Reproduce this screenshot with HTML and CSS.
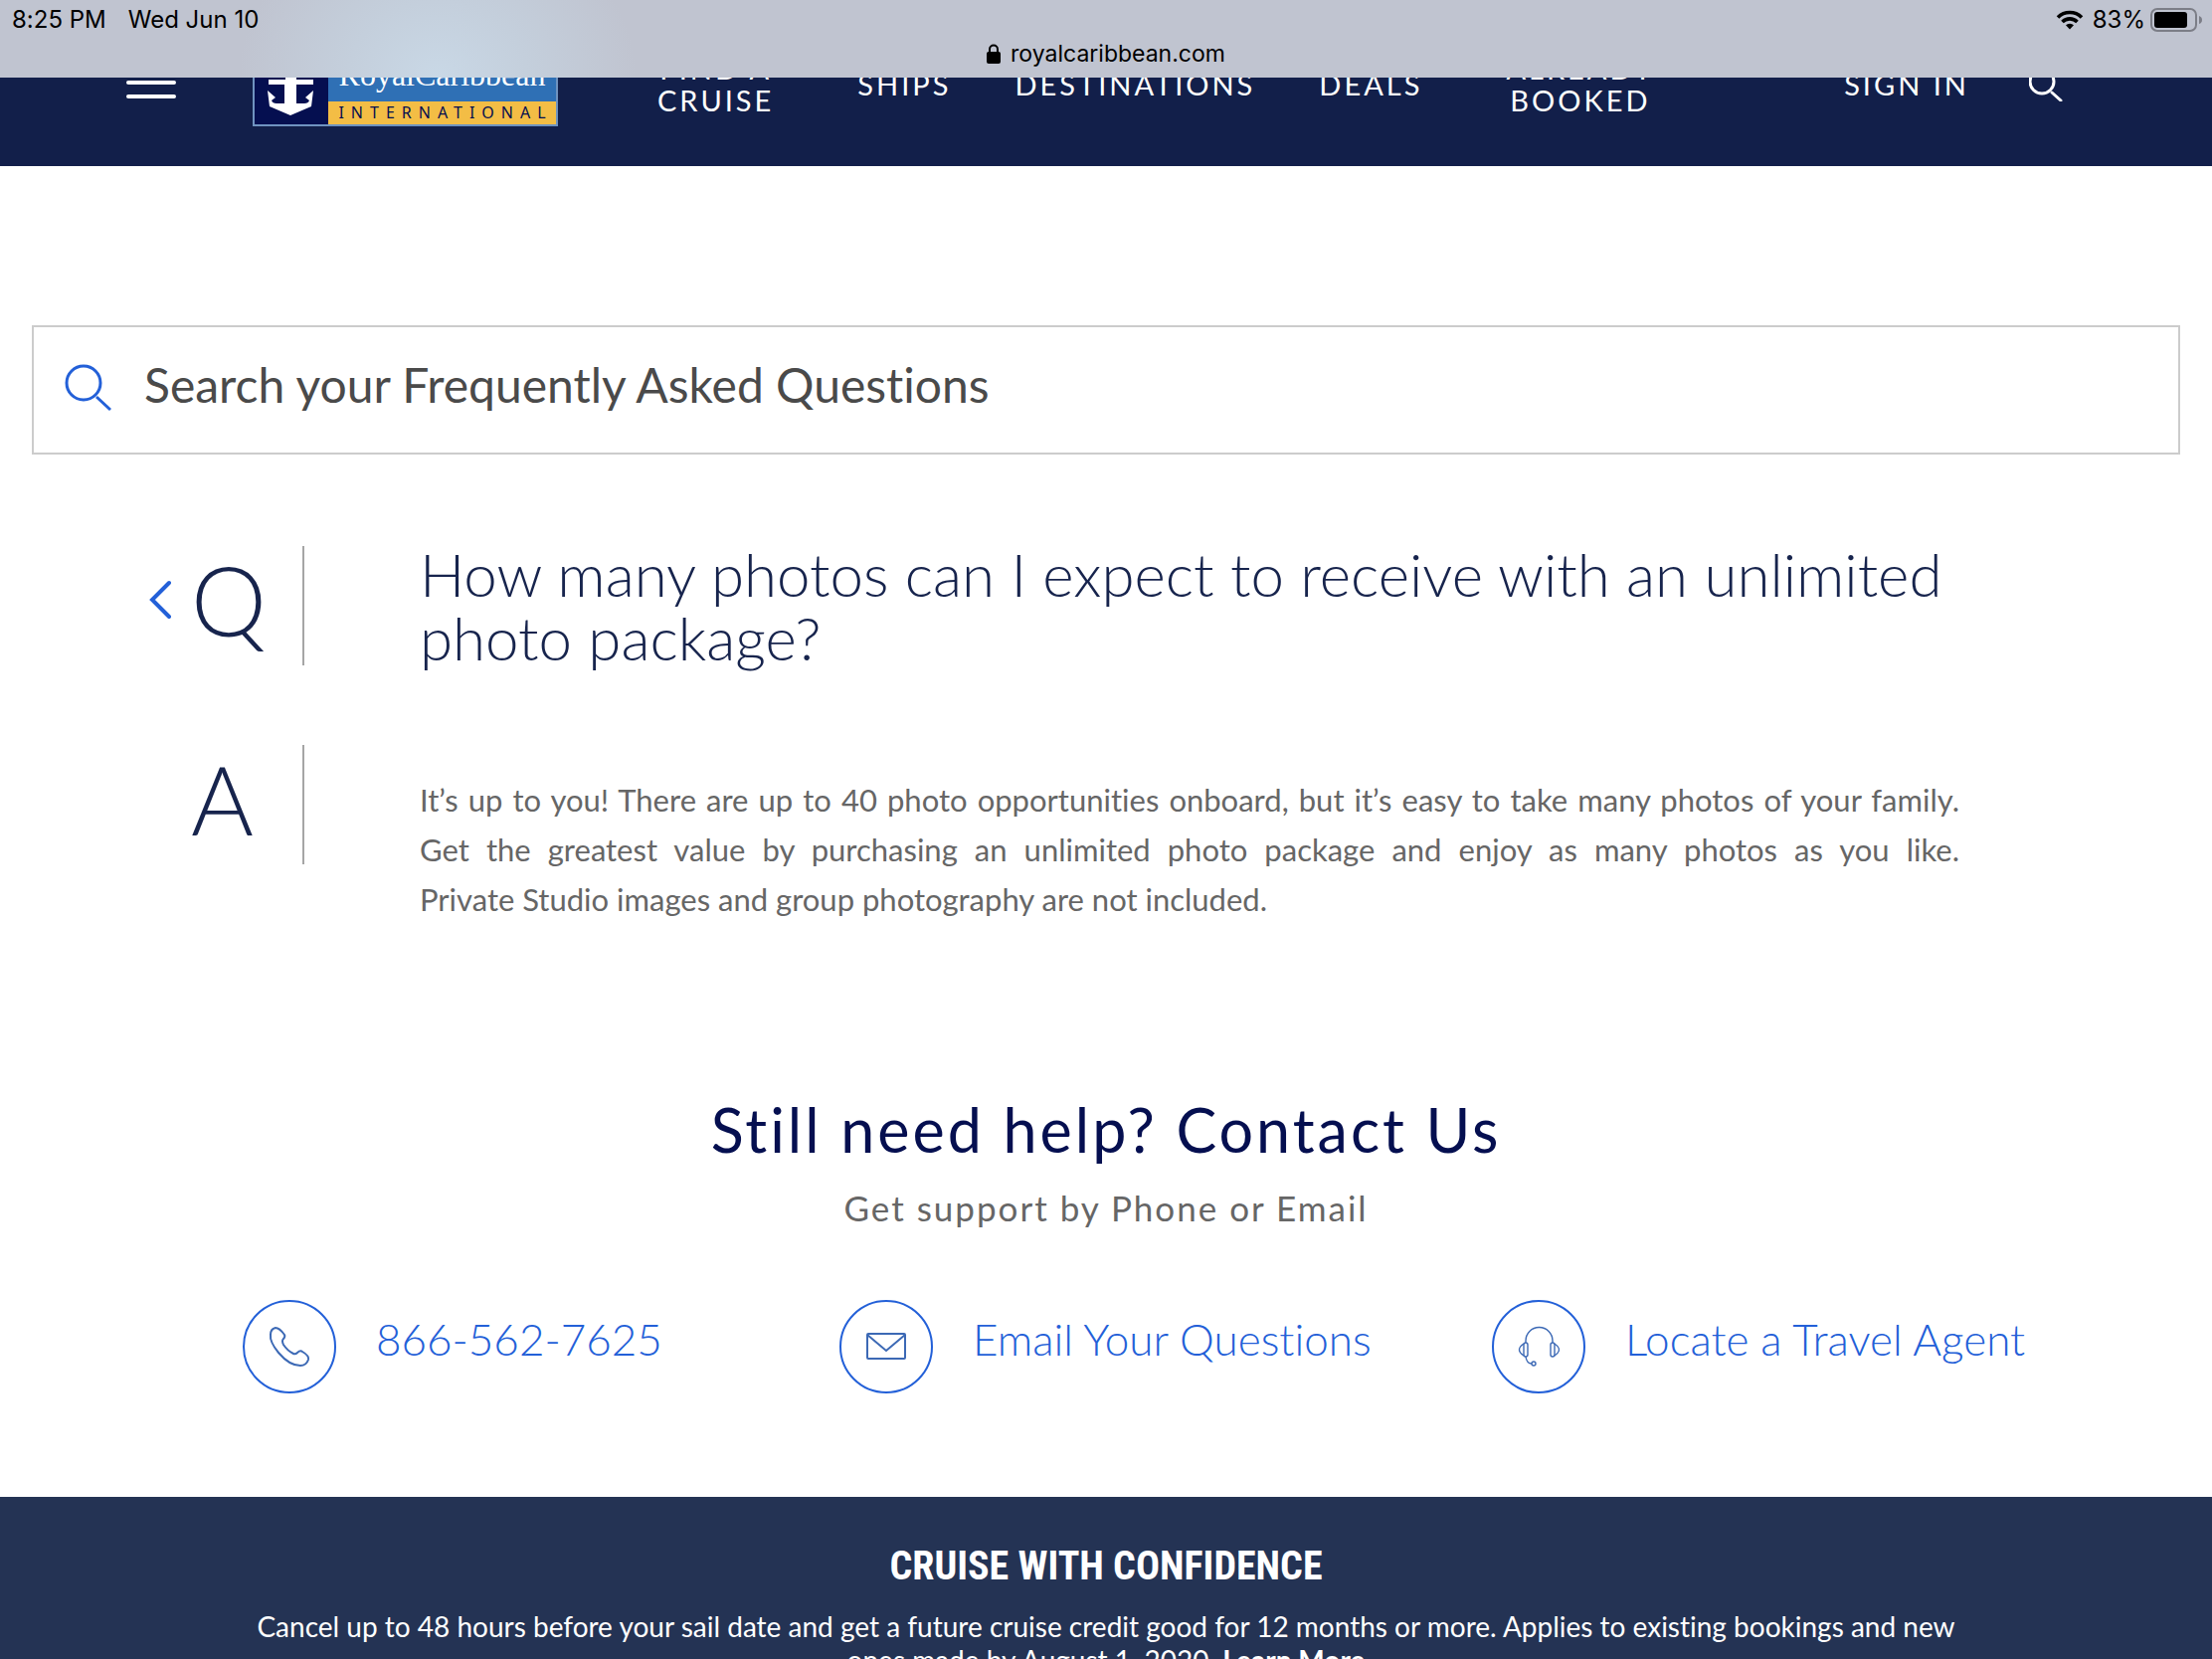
FILE: index.html
```html
<!DOCTYPE html>
<html lang="en">
<head>
  <meta charset="UTF-8" />
  <meta name="viewport" content="width=device-width, initial-scale=1.0"/>
  <title>FAQ | Royal Caribbean International</title>
  <link rel="stylesheet" href="styles.css">
</head>
<body>

  <div class="status-bar">
    <div class="status-row">
      <span>8:25 PM</span>
      <span>Wed Jun 10</span>
      <span class="status-right">
        <svg class="wifi" viewBox="0 0 28 20" width="28" height="20" aria-hidden="true">
          <path d="M2 7.500a17 17 0 0 1 24 0M6.500 12a10.600 10.600 0 0 1 15 0" fill="none" stroke="#000" stroke-width="3.600"/>
          <path d="M14 19.500l-4-4.200a5.800 5.800 0 0 1 8 0z"/>
        </svg>
        <span>83%</span>
        <svg viewBox="0 0 52 24" width="52" height="24" aria-hidden="true">
          <rect x="1" y="1" width="45" height="22" rx="6" fill="none" stroke="#7c7e87" stroke-width="2"/>
          <rect x="4" y="4" width="33" height="16" rx="3"/>
          <path d="M49 8q3 1 3 4t-3 4z" fill="#7c7e87"/>
        </svg>
      </span>
    </div>
    <div class="address">
      <svg viewBox="0 0 14 20" width="14" height="20" aria-hidden="true">
        <path d="M3 9V5.500a4 4 0 0 1 8 0V9" fill="none" stroke="#000" stroke-width="2"/>
        <rect y="8" width="14" height="12" rx="2"/>
      </svg>
      <span>royalcaribbean.com</span>
    </div>
  </div>

  <header class="site-header">
    <button class="menu-button" aria-label="Menu"><i></i><i></i><i></i></button>
    <a class="logo" href="#" aria-label="Royal Caribbean International">
      <svg viewBox="0 0 74 80" width="74" height="80" aria-hidden="true">
        <path fill="#fff" d="M31 8h11v27h17v5H42v19h8q4 0 5-3l-4-3 8-7-2 16-21 9-21-9-2-16 8 7-4 3q1 3 5 3h8V40H14v-5h17z"/>
      </svg>
      <span class="logo-text">
        <span class="logo-name">RoyalCaribbean</span>
        <span class="logo-sub">INTERNATIONAL</span>
      </span>
    </a>
    <nav class="main-nav">
      <a class="find" href="#">FIND A<br>CRUISE</a>
      <a href="#">SHIPS</a>
      <a href="#">DESTINATIONS</a>
      <a href="#">DEALS</a>
      <a class="booked" href="#">ALREADY<br>BOOKED</a>
    </nav>
    <div class="account">
      <a href="#">SIGN IN</a>
      <button aria-label="Search">
        <svg viewBox="0 0 34 34" width="34" height="34" fill="none" stroke="#fff" stroke-width="3" stroke-linecap="round">
          <circle cx="13" cy="14" r="12"/>
          <path d="M23 25l9 8"/>
        </svg>
      </button>
    </div>
  </header>

  <main>
    <form class="search-box">
      <svg viewBox="0 0 48 48" width="48" height="48" fill="none" stroke="#2360d8" stroke-width="3" aria-hidden="true">
        <circle cx="19" cy="19" r="17"/>
        <path d="M32 33l14 13"/>
      </svg>
      <input type="text" aria-label="Search your Frequently Asked Questions" placeholder="Search your Frequently Asked Questions">
    </form>

    <section class="faq">
      <div class="faq-row">
        <div class="marker">
          <a href="#" aria-label="Back">
            <svg viewBox="0 0 22 40" width="22" height="40" fill="none" stroke="#2360d8" stroke-width="4" stroke-linecap="round">
              <path d="M20 3L3 20l17 17"/>
            </svg>
          </a>
          <span>Q</span>
        </div>
        <h1>How many photos can I expect to receive with an unlimited photo package?</h1>
      </div>
      <div class="faq-row">
        <div class="marker answer-marker"><span>A</span></div>
        <p class="answer">It’s up to you! There are up to 40 photo opportunities onboard, but it’s easy to take many photos of your family. Get the greatest value by purchasing an unlimited photo package and enjoy as many photos as you like. Private&nbsp;Studio images and group photography are not included.</p>
      </div>
    </section>

    <section class="contact">
      <h2>Still need help? Contact Us</h2>
      <p>Get support by Phone or Email</p>
      <div class="contact-links">
        <a href="tel:8665627625">
          <span class="circle">
            <svg viewBox="0 0 44 44" width="44" height="44">
              <path d="M8 3q4 0 9 7 1 2-1 4t0 6q4 6 10 9 2 1 4-1 3-3 5-1 7 4 6 8-2 6-8 6Q22 41 11 28 2 17 3 10q0-6 5-7z"/>
            </svg>
          </span>
          <span>866-562-7625</span>
        </a>
        <a href="#">
          <span class="circle">
            <svg viewBox="0 0 40 28" width="40" height="28">
              <rect x="1" y="1" width="38" height="25" rx="1"/>
              <path d="M1 2l19 16L39 2"/>
            </svg>
          </span>
          <span>Email Your Questions</span>
        </a>
        <a href="#">
          <span class="circle">
            <svg viewBox="0 0 42 42" width="42" height="42">
              <g stroke-width="1.400">
                <path d="M8 17v-2a13 13 0 0 1 27 0v2M8 31q1 7 6 7"/>
                <rect x="6" y="17" width="4" height="14" rx="2"/>
                <rect x="33" y="17" width="4" height="14" rx="2"/>
                <path d="M6 18q-9 6 0 12M37 18q9 6 0 12"/>
                <circle cx="16" cy="38" r="2"/>
              </g>
            </svg>
          </span>
          <span>Locate a Travel Agent</span>
        </a>
      </div>
    </section>
  </main>

  <footer class="confidence">
    <h2>CRUISE WITH CONFIDENCE</h2>
    <p>Cancel up to 48 hours before your sail date and get a future cruise credit good for 12 months or more. Applies to existing bookings and new ones made by August 1, 2020. <a href="#">Learn More</a></p>
  </footer>

</body>
</html>
```

FILE: styles.css
```css
:root {
  --navy: #121f4a;
  --ink: #17244d;
  --blue: #2360d8;
  --gray: #666;
}

* {
  box-sizing: border-box;
}

html {
  scrollbar-width: none;
}

body {
  margin: 0;
  background: #fff;
  font-family: Lato, "Open Sans", sans-serif;
  font-variant-ligatures: none;
}

h1, h2, p {
  margin: 0;
  font-weight: 400;
}

a {
  color: inherit;
  text-decoration: none;
}

button {
  padding: 0;
  border: 0;
  background: none;
}

svg {
  display: block;
}

/* tablet status bar, laid over the top of the page */
.status-bar {
  position: fixed;
  top: 0;
  left: 0;
  right: 0;
  z-index: 10;
  height: 78px;
  background: radial-gradient(ellipse 200px 170px at 440px 100%, #c9d8e6, #c4cfdc 45%, #c0c4d000), #c0c4d0;
  color: #000;
  font-family: Inter, Roboto, sans-serif;
  font-size: 24px;
  line-height: 28px;
}

.status-row {
  display: flex;
  gap: 22px;
  padding: 6px 10px 0 12px;
}

.status-right {
  display: flex;
  align-items: center;
  gap: 5px;
  margin-left: auto;
}

.wifi {
  margin-right: 4px;
}

.address {
  display: flex;
  align-items: center;
  justify-content: center;
  gap: 10px;
  margin-top: 6px;
  font-size: 23px;
}

.site-header {
  display: flex;
  align-items: center;
  height: 167px;
  padding: 2px 150px 0 127px;
  background: var(--navy);
  color: #fff;
  font-size: 29px;
  line-height: 32px;
  letter-spacing: 3px;
}

.menu-button {
  display: grid;
  gap: 10px;
  width: 50px;
  padding-bottom: 4px;
}

.menu-button i {
  height: 4px;
  border-radius: 2px;
  background: #fff;
}

.logo {
  display: flex;
  width: 307px;
  height: 84px;
  margin-left: 77px;
  border: 2px solid #6f93c0;
  background: #050f50;
}

.logo-text {
  flex: 1;
  display: flex;
  flex-direction: column;
  text-align: center;
}

.logo-name {
  flex: 1;
  padding-top: 4px;
  background: #2f70b5;
  font: 32px/52px "Liberation Serif", serif;
  letter-spacing: 0;
}

.logo-sub {
  padding-left: 7px;
  background: #f3bd45;
  color: #050f50;
  font: 16px/23px "Noto Sans", sans-serif;
  letter-spacing: 7px;
}

.main-nav {
  display: flex;
  align-items: center;
  gap: 64px;
  margin-left: 100px;
  text-align: center;
}

.find {
  padding-right: 20px;
}

.booked {
  padding-left: 20px;
}

.account {
  display: flex;
  align-items: center;
  gap: 60px;
  margin-left: auto;
}

main {
  padding: 160px 32px 0;
}

.search-box {
  display: flex;
  align-items: center;
  gap: 32px;
  height: 130px;
  padding: 0 32px 4px 31px;
  border: 2px solid #ccc;
}

.search-box input {
  flex: 1;
  height: 64px;
  padding: 0 0 8px;
  border: 0;
  outline: 0;
  background: none;
  font: inherit;
  font-size: 48px;
}

.search-box input::placeholder {
  color: #4a4a4a;
  opacity: 1;
}

.faq {
  display: grid;
  gap: 76px;
  padding: 92px 222px 0 118px;
}

.faq-row {
  display: grid;
  grid-template-columns: 156px 1fr;
  column-gap: 116px;
}

.marker {
  display: flex;
  align-items: center;
  gap: 20px;
  height: 120px;
  padding-bottom: 12px;
  border-right: 2px solid #a5a5a5;
  color: var(--ink);
  font-size: 96px;
  font-weight: 300;
  line-height: 108px;
}

.answer-marker {
  padding-left: 42px;
}

h1 {
  margin-top: -4px;
  color: var(--ink);
  font-size: 60px;
  font-weight: 300;
  line-height: 64px;
}

.answer {
  padding-top: 30px;
  color: var(--gray);
  font-size: 31px;
  line-height: 50px;
  text-align: justify;
}

.contact {
  padding-top: 166px;
  text-align: center;
}

.contact h2 {
  color: #050f50;
  font-size: 61px;
  line-height: 82px;
  letter-spacing: 3px;
}

.contact p {
  color: var(--gray);
  font-size: 35px;
  line-height: 74px;
  letter-spacing: 2px;
}

.contact-links {
  display: grid;
  grid-template-columns: 600fr 656fr 546fr;
  padding: 56px 146px 104px 212px;
  color: var(--blue);
  font-size: 44px;
  font-weight: 300;
  line-height: 78px;
  white-space: nowrap;
}

.contact-links a {
  display: flex;
  gap: 40px;
}

.circle {
  display: grid;
  place-items: center;
  width: 94px;
  height: 94px;
  border: 2px solid var(--blue);
  border-radius: 50%;
}

.circle svg {
  fill: none;
  stroke: #3c69b5;
  stroke-width: 2;
}

.confidence {
  padding: 38px 240px;
  background: #243354;
  color: #fff;
  text-align: center;
}

.confidence h2 {
  font-family: "Roboto Condensed", Roboto, sans-serif;
  font-size: 40px;
  font-weight: 700;
  line-height: 64px;
}

.confidence p {
  margin-top: 11px;
  font-size: 28px;
  line-height: 34px;
}

.confidence p a {
  font-weight: 700;
}
```
